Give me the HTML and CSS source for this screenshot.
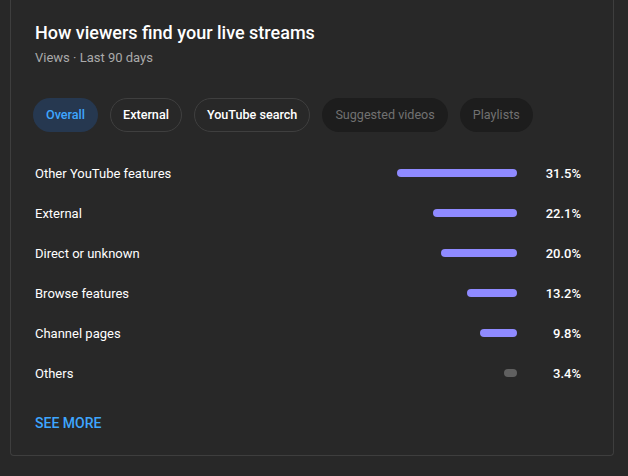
FILE: index.html
```html
<!DOCTYPE html>
<html lang="en">
<head>
<meta charset="utf-8">
<link rel="stylesheet" href="styles.css">
</head>
<body>
<section class="card">
  <h2 class="title">How viewers find your live streams</h2>
  <div class="subtitle">Views · Last 90 days</div>
  <div class="chips">
    <span class="chip chip-active">Overall</span>
    <span class="chip chip-outline">External</span>
    <span class="chip chip-outline">YouTube search</span>
    <span class="chip chip-disabled">Suggested videos</span>
    <span class="chip chip-disabled">Playlists</span>
  </div>
  <div class="rows">
    <div class="row"><span class="label">Other YouTube features</span><span class="track"><span class="bar" style="width:120px"></span></span><span class="pct">31.5%</span></div>
    <div class="row"><span class="label">External</span><span class="track"><span class="bar" style="width:84px"></span></span><span class="pct">22.1%</span></div>
    <div class="row"><span class="label">Direct or unknown</span><span class="track"><span class="bar" style="width:76px"></span></span><span class="pct">20.0%</span></div>
    <div class="row"><span class="label">Browse features</span><span class="track"><span class="bar" style="width:50px"></span></span><span class="pct">13.2%</span></div>
    <div class="row"><span class="label">Channel pages</span><span class="track"><span class="bar" style="width:37px"></span></span><span class="pct">9.8%</span></div>
    <div class="row"><span class="label">Others</span><span class="track"><span class="bar bar-muted" style="width:13px"></span></span><span class="pct">3.4%</span></div>
  </div>
  <a class="see-more" href="#">SEE MORE</a>
</section>
</body>
</html>
```
FILE: styles.css
```css
html, body {
  margin: 0;
  padding: 0;
  background: #282828;
  font-family: Roboto, "Noto Sans", Arial, sans-serif;
  color: #ffffff;
}
.card {
  margin-left: 10px;
  width: 604px;
  box-sizing: border-box;
  border: 1px solid #3e3e3e;
  border-top: none;
  border-radius: 0 0 4px 4px;
  padding: 21px 32px 22px 24px;
}
.title {
  margin: 0;
  font-size: 18px;
  line-height: 24px;
  font-weight: 500;
}
.subtitle {
  margin-top: 4px;
  font-size: 13px;
  line-height: 18px;
  color: #aaaaaa;
}
.chips {
  display: flex;
  gap: 12px;
  margin-top: 31px;
  margin-left: -2px;
}
.chip {
  box-sizing: border-box;
  height: 34px;
  line-height: 32px;
  padding: 0 12px;
  border-radius: 17px;
  font-size: 12.6px;
  font-weight: 500;
  border: 1px solid transparent;
}
.chip-active {
  background: #263850;
  color: #3ea6ff;
}
.chip-outline {
  border-color: #3f3f3f;
  color: #ffffff;
}
.chip-disabled {
  background: #1d1d1d;
  color: #717171;
  font-weight: 400;
}
.rows {
  margin-top: 21px;
}
.row {
  display: flex;
  align-items: center;
  height: 40px;
  font-size: 13px;
}
.label {
  flex: 1;
}
.track {
  display: flex;
  justify-content: flex-end;
}
.bar {
  display: block;
  height: 8px;
  border-radius: 4px;
  background: #8f8aff;
}
.bar-muted {
  background: #606060;
}
.pct {
  width: 64px;
  text-align: right;
  font-weight: 500;
}
.see-more {
  display: inline-block;
  margin-top: 20px;
  font-size: 14px;
  line-height: 20px;
  font-weight: 500;
  color: #3ea6ff;
  text-decoration: none;
}
```
